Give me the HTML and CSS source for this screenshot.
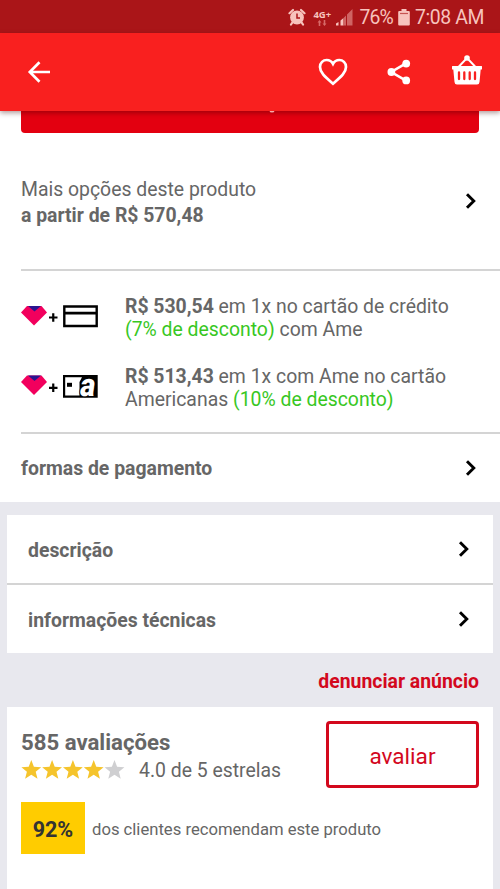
FILE: index.html
```html
<!DOCTYPE html>
<html lang="pt-BR">
<head>
<meta charset="utf-8">
<title>Produto</title>
<link rel="stylesheet" href="styles.css">
</head>
<body>
<div class="status">
  <svg class="alarm" width="18" height="18" viewBox="0 0 18 18"><circle cx="9" cy="9.500" r="6.900" fill="#f7c3bd"/><path d="M1.500 5.200 5 2M16.500 5.200 13 2M4.300 14.600 3 16.500M13.700 14.600 15 16.500" stroke="#f7c3bd" stroke-width="2.200" stroke-linecap="round"/><path d="M9 5.500V10H12" fill="none" stroke="#aa1518" stroke-width="1.500"/></svg>
  <div class="net"><span>4G+</span><svg width="10" height="6" viewBox="0 0 10 6"><path d="M2.500 0 4.500 2.500H3.300V6H1.700V2.500H.5zM7.500 6 5.500 3.500H6.700V0H8.300V3.500H9.500z" fill="#d66a68"/></svg></div>
  <svg class="signal" width="17" height="17" viewBox="0 0 17 17"><path d="M0 14.500 2.500 13v3.500H0zM4.500 11.500 7.500 9v7.500h-3z" fill="#f7c3bd"/><path d="M7.500 9 10 6.500v10H7.500zM11 5.500 16.500 0v16.500H11z" fill="#cf6463"/></svg>
  <span class="pct">76%</span>
  <svg class="battery" width="12" height="17" viewBox="0 0 12 17"><path d="M3.500 0h5v2h2.300q1 0 1 1v12.500q0 1-1 1H1.200q-1 0-1-1V3q0-1 1-1h2.300z" fill="#f7c3bd"/><path d="M2 4.500h8" stroke="#c65452" stroke-width="1.200"/></svg>
  <span class="clock">7:08 AM</span>
</div>
<header class="bar">
  <svg class="back" width="24" height="24" viewBox="0 0 24 24"><path d="M12.500 2.200 2.800 12l9.700 9.800M2.800 12H23" fill="none" stroke="#fff" stroke-width="2.700"/></svg>
  <svg class="heart" width="32" height="30" viewBox="0 0 32 30"><path d="M16 26.700C7.500 19.500 3 15.500 3 9.900 3 5.700 6.200 3 9.700 3c2.600 0 5 1.400 6.300 3.800C17.300 4.400 19.700 3 22.300 3 25.800 3 29 5.700 29 9.900c0 5.600-4.500 9.600-13 16.800z" fill="none" stroke="#fff" stroke-width="2.700"/></svg>
  <svg class="share" width="24" height="26" viewBox="0 0 24 26"><path d="M19 4.400 4.200 13 19 21.600" fill="none" stroke="#fff" stroke-width="2.600"/><g fill="#fff"><circle cx="19.200" cy="4.600" r="3.900"/><circle cx="4.400" cy="13" r="3.900"/><circle cx="19.200" cy="21.400" r="3.900"/></g></svg>
  <svg class="basket" width="32" height="32" viewBox="0 0 32 32"><path d="M7.500 13 16 4l8.500 9" fill="none" stroke="#fff" stroke-width="1.900"/><circle cx="16" cy="4" r="2.800" fill="#fff"/><path d="M1.500 12h29q.5 0 .5.500V15q0 .5-.5.500h-.8L28.500 28q-.2 2.500-2.500 2.500H6Q3.700 30.500 3.500 28L2.300 15.500h-.8Q1 15.500 1 15v-2.500q0-.5.500-.5z" fill="#fff"/><path d="M8 18.500v6.500M13.300 18.500v6.500M18.700 18.500v6.500M24 18.500v6.500" stroke="#f9201f" stroke-width="2.300" stroke-linecap="round"/></svg>
</header>
<main>
  <section class="sheet">
    <div class="buy"><svg width="6" height="3" viewBox="0 0 6 3"><ellipse cx="3" cy=".4" rx="2.300" ry="1" fill="#f7a9aa"/></svg></div>
    <div class="options">
      <p>Mais opções deste produto<br><b>a partir de R$ 570,48</b></p>
      <svg class="chev" width="12" height="18" viewBox="0 0 12 18"><path d="M2 2.200 8.800 9 2 15.800" fill="none" stroke="#000" stroke-width="2.900"/></svg>
    </div>
    <div class="offers">
      <div class="offer">
        <svg width="78" height="26" viewBox="0 0 78 26"><path d="M6 3H20.500L26 9.500 13 22.500 0 9.500z" fill="#f2005d"/><path d="M7 3H20L13.500 8.500z" fill="#2a1490"/><path d="M28 14.500h8.500M32.250 10.200v8.600" stroke="#000" stroke-width="2.200"/><path d="M43.300 3.500h32.400v19.500H43.300z" fill="none" stroke="#000" stroke-width="2.400"/><path d="M43 10.200h33" stroke="#000" stroke-width="2.800"/></svg>
        <p><b>R$ 530,54</b> em 1x no cartão de crédito<br><span class="off">(7% de desconto)</span> com Ame</p>
      </div>
      <div class="offer">
        <svg width="78" height="26" viewBox="0 0 78 26"><path d="M6 2.500H20.500L26 9 13 22 0 9z" fill="#f2005d"/><path d="M7 2.500H20L13.500 8z" fill="#2a1490"/><path d="M28 14.800h8.500M32.250 10.500v8.600" stroke="#000" stroke-width="2.200"/><path d="M42 2H76.700V24.700H42z"/><path d="M44.200 4.200H61L58.500 9V22.500H44.200z" fill="#fff"/><path d="M46 9.800h5v4h-5z"/><text transform="translate(58 22.500) skewX(-8)" textLength="15" lengthAdjust="spacingAndGlyphs" class="brand">a</text></svg>
        <p><b>R$ 513,43</b> em 1x com Ame no cartão<br>Americanas <span class="off">(10% de desconto)</span></p>
      </div>
    </div>
    <div class="payment">
      <b>formas de pagamento</b>
      <svg class="chev" width="12" height="18" viewBox="0 0 12 18"><path d="M2 2.200 8.800 9 2 15.800" fill="none" stroke="#000" stroke-width="2.900"/></svg>
    </div>
  </section>
  <section class="card">
    <div class="row">
      <b>descrição</b>
      <svg class="chev" width="12" height="18" viewBox="0 0 12 18"><path d="M2 2.200 8.800 9 2 15.800" fill="none" stroke="#000" stroke-width="2.900"/></svg>
    </div>
    <div class="row">
      <b>informações técnicas</b>
      <svg class="chev" width="12" height="18" viewBox="0 0 12 18"><path d="M2 2.200 8.800 9 2 15.800" fill="none" stroke="#000" stroke-width="2.900"/></svg>
    </div>
  </section>
  <div class="report">denunciar anúncio</div>
  <section class="card reviews">
    <div class="summary">
      <div>
        <h2>585 avaliações</h2>
        <div class="rating">
          <svg width="104" height="20" viewBox="0 0 104 20"><defs><path id="star" d="M10.300 0 12.900 6.700 20.200 7.200 14.700 11.700 16.500 18.700 10.300 14.800 4.100 18.700 5.900 11.700 .4 7.200 7.700 6.700z"/></defs><g fill="#f5c42c"><use href="#star"/><use href="#star" x="20.800"/><use href="#star" x="41.600"/><use href="#star" x="62.400"/></g><use href="#star" x="83.200" fill="#cfcfd1"/></svg>
          <span>4.0 de 5 estrelas</span>
        </div>
      </div>
      <div class="rate">avaliar</div>
    </div>
    <div class="recommend"><b>92%</b><span>dos clientes recomendam este produto</span></div>
  </section>
</main>
</body>
</html>
```
FILE: styles.css
```css
* { box-sizing: border-box; margin: 0; padding: 0; }
body {
  width: 500px;
  height: 889px;
  overflow: hidden;
  background: #e8e8ee;
  color: #666;
  font: 19.4px/23px Roboto, sans-serif;
}
b { font-weight: 700; }
svg { display: block; flex: none; }
.status {
  height: 33px;
  padding: 1px 16px 0 0;
  background: #aa1518;
  color: #f7c3bd;
  display: flex;
  justify-content: flex-end;
  align-items: center;
  white-space: nowrap;
}
.net {
  width: 19px;
  margin: 1px 4px 0 7px;
  font: 700 9.5px/10px "Open Sans", sans-serif;
}
.net svg { margin: 0 0 0 4px; }
.pct { margin: 0 5px 0 6px; letter-spacing: -.8px; }
.clock { margin-left: 5px; letter-spacing: -.4px; }
.pct, .clock { font-size: 19.4px; }
.bar {
  position: relative;
  z-index: 1;
  height: 78px;
  padding: 0 17px 0 27px;
  background: #f9201f;
  box-shadow: 0 2px 5px rgba(60, 0, 0, .4);
  display: flex;
  align-items: center;
}
.heart { margin-left: auto; }
.share { margin-left: 38px; }
.basket { margin: 0 0 5px 40px; }
.sheet { height: 391px; background: #fff; }
.buy {
  height: 22px;
  margin: 0 21px;
  padding-left: 248px;
  background: #e30010;
  border-radius: 0 0 4px 4px;
}
.buy svg { position: relative; z-index: 2; }
.options {
  height: 138px;
  margin-left: 21px;
  padding: 0 23px 0 0;
  border-bottom: 2px solid #d4d4d4;
  display: flex;
  align-items: center;
  justify-content: space-between;
  line-height: 26px;
}
.options p { margin-top: 4px; }
.offers {
  height: 163px;
  margin-left: 21px;
  padding-top: 24px;
  border-bottom: 2px solid #d4d4d4;
}
.offer { display: flex; gap: 26px; height: 70px; }
.offer svg { margin-top: 8px; overflow: visible; }
.offer p { white-space: nowrap; }
.off { color: #38c71f; }
.brand {
  font: 900 32px Roboto, sans-serif;
  fill: #fff;
  stroke: #000;
  stroke-width: 2px;
  paint-order: stroke;
}
.payment, .row {
  display: flex;
  align-items: center;
  justify-content: space-between;
}
.payment { height: 68px; padding: 0 23px 0 21px; }
.card { margin: 13px 7px 0; background: #fff; }
.row { height: 68px; padding: 0 23px 0 21px; }
.row:first-child { height: 70px; border-bottom: 2px solid #d4d4d4; }
.row b { margin-top: 2px; }
.report {
  height: 54px;
  padding-right: 21px;
  color: #d3081d;
  font-size: 19.400px;
  font-weight: 700;
  line-height: 57px;
  text-align: right;
}
.reviews { height: 182px; margin-top: 0; padding: 14px 14px 0; }
.summary { display: flex; justify-content: space-between; }
h2 { margin-top: 8px; font-size: 22.200px; line-height: 26px; }
.rating { display: flex; gap: 14px; align-items: center; margin-top: 4px; }
.rating svg { margin-top: -1px; }
.rate {
  width: 153px;
  height: 67px;
  border: 3px solid #d3081d;
  border-radius: 4px;
  color: #d3081d;
  font-size: 22.600px;
  line-height: 65px;
  text-align: center;
}
.recommend { display: flex; align-items: center; gap: 7px; margin-top: 14px; }
.recommend b {
  width: 64px;
  height: 52px;
  background: #fc0;
  color: #333;
  font-size: 21.500px;
  line-height: 55px;
  text-align: center;
}
.recommend span { margin-top: 2px; font-size: 16.650px; }
```
